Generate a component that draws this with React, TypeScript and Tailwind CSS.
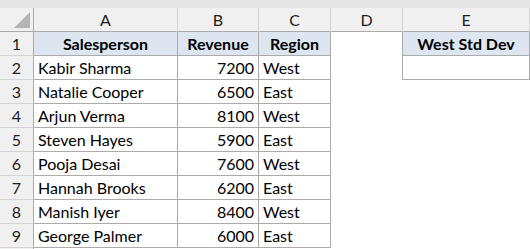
import React from 'react';

type Row = { name: string; revenue: number; region: string };

const rows: Row[] = [
    { name: 'Kabir Sharma', revenue: 7200, region: 'West' },
    { name: 'Natalie Cooper', revenue: 6500, region: 'East' },
    { name: 'Arjun Verma', revenue: 8100, region: 'West' },
    { name: 'Steven Hayes', revenue: 5900, region: 'East' },
    { name: 'Pooja Desai', revenue: 7600, region: 'West' },
    { name: 'Hannah Brooks', revenue: 6200, region: 'East' },
    { name: 'Manish Iyer', revenue: 8400, region: 'West' },
    { name: 'George Palmer', revenue: 6000, region: 'East' },
];

const cell = 'h-6 box-border border-r border-b border-[#ababab] flex items-center';
const rowHead =
    'w-[34px] h-6 box-border border-r border-b border-r-[#ababab] border-b-[#d4d4d4] bg-[#f0f0f0] flex items-center justify-center text-[#1e1e1e]';

const ColHead: React.FC<{ label: string; className: string }> = ({ label, className }) => (
    <div
        className={`h-6 box-border border-r border-b border-r-[#d4d4d4] border-b-[#ababab] bg-[#f0f0f0] flex items-center justify-center text-[#1e1e1e] ${className}`}
    >
        {label}
    </div>
);

export default function App() {
    return (
        <div
            className="w-[530px] h-[249px] bg-white overflow-hidden text-[16px] leading-none text-black"
            style={{ fontFamily: 'Lato, "Open Sans", sans-serif' }}
        >
            <div className="h-2 bg-[#e6e6e6]" />

            {/* column headers */}
            <div className="flex">
                <div className="w-[34px] h-6 box-border border-r border-b border-[#ababab] bg-[#f0f0f0] relative">
                    <svg className="absolute left-[14px] top-[4px]" width="16" height="16" viewBox="0 0 16 16">
                        <polygon points="16,0 16,16 0,16" fill="#b4b4b4" />
                    </svg>
                </div>
                <ColHead label="A" className="w-[144px]" />
                <ColHead label="B" className="w-[81px]" />
                <ColHead label="C" className="w-[72px]" />
                <ColHead label="D" className="w-[72px]" />
                <ColHead label="E" className="w-[127px]" />
            </div>

            {/* row 1 */}
            <div className="flex">
                <div className={rowHead}>1</div>
                <div className={`${cell} w-[144px] bg-[#dde6f0] justify-center font-bold`}>Salesperson</div>
                <div className={`${cell} w-[81px] bg-[#dde6f0] justify-center font-bold`}>Revenue</div>
                <div className={`${cell} w-[72px] bg-[#dde6f0] justify-center font-bold`}>Region</div>
                <div className="w-[71px] h-6" />
                <div className={`${cell} w-[128px] border-l bg-[#dde6f0] justify-center font-bold`}>West Std Dev</div>
            </div>

            {rows.map((r, i) => (
                <div key={r.name} className="flex">
                    <div className={rowHead}>{i + 2}</div>
                    <div className={`${cell} w-[144px] pl-1`}>{r.name}</div>
                    <div className={`${cell} w-[81px] justify-end pr-1`}>{r.revenue}</div>
                    <div className={`${cell} w-[72px] pl-1`}>{r.region}</div>
                    <div className="w-[71px] h-6" />
                    {i === 0 ? <div className={`${cell} w-[128px] border-l`} /> : <div className="w-[128px] h-6" />}
                </div>
            ))}

            <div className="flex">
                <div className="w-[34px] h-px box-border border-r border-[#ababab] bg-[#f0f0f0]" />
            </div>
        </div>
    );
}
